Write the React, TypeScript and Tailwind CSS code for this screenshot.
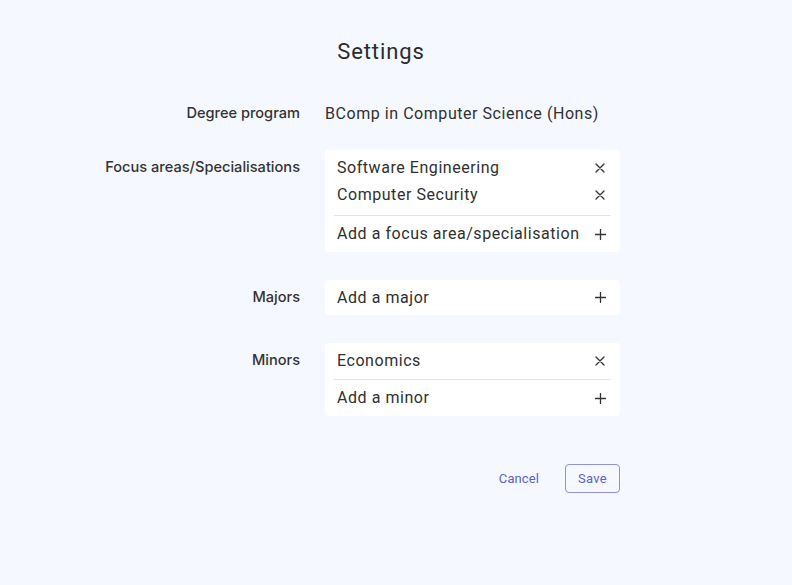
import React from "react";

const XIcon = () => (
  <svg width="10" height="10" viewBox="0 0 10 10" className="text-[#333]">
    <path d="M1 1L9 9M9 1L1 9" stroke="currentColor" strokeWidth="1.3" strokeLinecap="round" />
  </svg>
);

const PlusIcon = () => (
  <svg width="11" height="11" viewBox="0 0 11 11" className="text-[#333]">
    <path d="M5.5 0.5V10.5M0.5 5.5H10.5" stroke="currentColor" strokeWidth="1.3" strokeLinecap="round" />
  </svg>
);

const label = "flex justify-end whitespace-nowrap text-[14.6px] font-medium text-[#333] font-['Inter',sans-serif] leading-[27px]";
const value = "font-['Roboto',sans-serif] text-[16px] tracking-[0.55px] text-[#303030]";

const Item = ({ text }: { text: string }) => (
  <div className="flex h-[27px] items-center justify-between px-3">
    <span className={value}>{text}</span>
    <span className="mr-[3px] flex items-center">
      <XIcon />
    </span>
  </div>
);

const AddRow = ({ text, h = "h-9" }: { text: string; h?: string }) => (
  <div className={`flex ${h} items-center justify-between px-3`}>
    <span className={value}>{text}</span>
    <span className="mr-[2px] flex items-center">
      <PlusIcon />
    </span>
  </div>
);

const ListCard = ({ items, add, pb }: { items: string[]; add: string; pb: string }) => (
  <div className="rounded bg-white">
    <div className={`pt-1 ${pb}`}>
      {items.map((i) => (
        <Item key={i} text={i} />
      ))}
    </div>
    <div className="mx-[9px] h-px bg-[#e3e3e3]" />
    <AddRow text={add} />
  </div>
);

export default function App() {
  return (
    <div className="min-h-[585px] w-full bg-[#f5f8fe]">
      <div className="ml-[142px] w-[478px] pt-[38px]">
        <h1 className="text-center font-['Roboto',sans-serif] text-[22px] leading-[28px] tracking-[0.9px] text-[#2b2b2b]">
          Settings
        </h1>

        <div className="mt-[34px] grid grid-cols-[158px_295px] gap-x-[25px]">
          <div className={label}>Degree program</div>
          <div className={`${value} leading-[27px]`}>BComp in Computer Science (Hons)</div>

          <div className={`${label} mt-[23px] pt-1`}>Focus areas/Specialisations</div>
          <div className="mt-[23px]">
            <ListCard items={["Software Engineering", "Computer Security"]} add="Add a focus area/specialisation" pb="pb-[7px]" />
          </div>

          <div className={`${label} mt-[28px] pt-[4px]`}>Majors</div>
          <div className="mt-[28px]">
            <div className="rounded bg-white">
              <AddRow text="Add a major" h="h-[35px]" />
            </div>
          </div>

          <div className={`${label} mt-[28px] pt-1`}>Minors</div>
          <div className="mt-[28px]">
            <ListCard items={["Economics"]} add="Add a minor" pb="pb-[5px]" />
          </div>
        </div>

        <div className="mt-[48px] flex items-center justify-end gap-[14px]">
          <button className="h-[29px] px-3 font-['Roboto',sans-serif] text-[13px] tracking-[0.1px] text-[#5f62c9]">
            Cancel
          </button>
          <button className="h-[29px] w-[55px] rounded border border-[#8f91e0] font-['Roboto',sans-serif] text-[13px] tracking-[0.3px] text-[#5f62c9]">
            Save
          </button>
        </div>
      </div>
    </div>
  );
}
